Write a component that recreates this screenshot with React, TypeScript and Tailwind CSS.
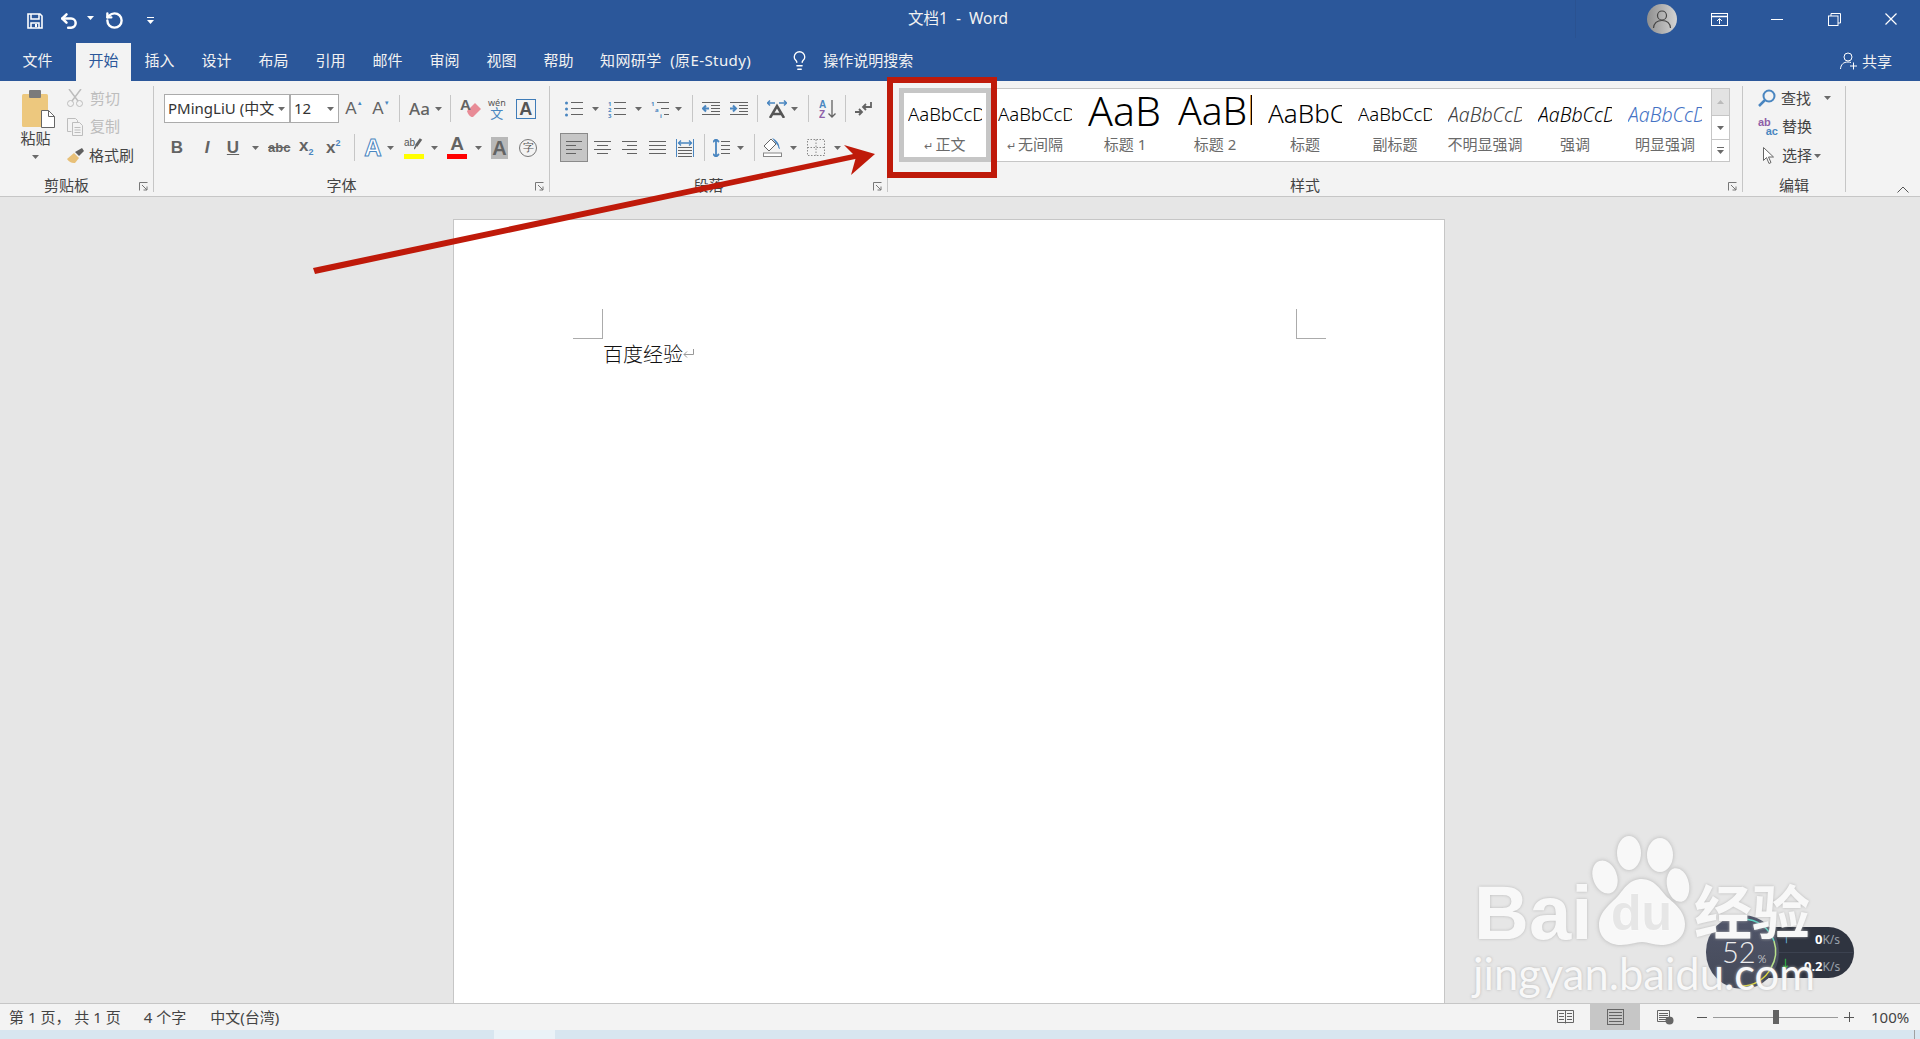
import React from 'react';
import { Lightbulb, RotateCcw, Undo2 } from 'lucide-react';

const GRAY = '#636363';
const BLUE = '#4a86c0';

function Caret({ color = '#6a6a6a', className = '' }: { color?: string; className?: string }) {
  return (
    <svg width="7" height="4" viewBox="0 0 7 4" className={`shrink-0 ${className}`}>
      <polygon points="0,0 7,0 3.5,4" fill={color} />
    </svg>
  );
}

function Launcher() {
  return (
    <svg width="9" height="9" viewBox="0 0 9 9" className="justify-self-end -mr-[15px]">
      <path d="M0.500 8.500V0.500H8.500M3 3L8 8M8 4.500V8H4.500" fill="none" stroke="#777" />
    </svg>
  );
}

function Sep({ className = '' }: { className?: string }) {
  return <div className={`w-px h-[27px] bg-[#c6c6c6] shrink-0 ${className}`} />;
}

function Lines({ x = 0, w = 16, ys, color = GRAY }: { x?: number; w?: number; ys: number[]; color?: string }) {
  return (
    <>
      {ys.map((y) => (
        <path key={y} d={`M${x} ${y}.5h${w}`} stroke={color} fill="none" />
      ))}
    </>
  );
}

function GroupLabel({ text }: { text: string }) {
  return (
    <div className="mt-auto h-[12px] grid grid-cols-[1fr_auto_1fr] items-center pr-[20px] text-[15px] leading-none text-[#444]">
      <span />
      <span className="-mt-[2px]">{text}</span>
      <Launcher />
    </div>
  );
}

function TitleBar() {
  return (
    <div className="h-[43px] grid grid-cols-[1fr_auto_1fr] items-center text-white">
      <div className="flex items-center pl-[27px] -mt-[2px]">
        <svg width="16" height="16" viewBox="0 0 16 16">
          <path d="M1 1h12l2 2v12H1z" fill="none" stroke="#fff" strokeWidth="1.600" />
          <path d="M4 1v5h8V1M4 15v-5h8v5" fill="none" stroke="#fff" strokeWidth="1.500" />
          <rect x="8" y="11" width="2" height="3" fill="#fff" />
        </svg>
        <Undo2 size={20} strokeWidth={3} className="ml-[16px] text-white" />
        <Caret color="#fff" className="ml-[8px] -mt-[5px]" />
        <RotateCcw size={19} strokeWidth={3} className="ml-[11px] text-white" />
        <svg width="7" height="7" viewBox="0 0 7 7" className="ml-[23px]">
          <path d="M0 0.500h7" stroke="#fff" />
          <polygon points="0,3 7,3 3.500,7" fill="#fff" />
        </svg>
      </div>
      <div className="text-[15.500px] text-[#f2f2f2] whitespace-pre -ml-[4px] -mt-[5px]">文档1  -  Word</div>
      <div className="flex items-center justify-end h-full">
        <div className="w-px h-[38px] bg-[#2a5291] mr-[71px] -mt-[5px]" />
        <div className="w-[30px] h-[30px] rounded-full bg-gradient-to-r from-[#8f8f8f] to-[#d4d4d4] flex items-center justify-center mr-[34px] -mt-[5px]">
          <svg width="20" height="20" viewBox="0 0 20 20">
            <circle cx="10" cy="6.500" r="4.500" fill="none" stroke="#444" strokeWidth="1.200" />
            <path d="M1.500 19c.5-5 4-7.500 8.500-7.500s8 2.500 8.500 7.500" fill="none" stroke="#444" strokeWidth="1.200" />
          </svg>
        </div>
        <svg width="17" height="13" viewBox="0 0 17 13" className="mr-[43px] -mt-[5px]">
          <rect x="0.500" y="0.500" width="16" height="12" fill="none" stroke="#fff" />
          <path d="M0 3.500h17" stroke="#fff" strokeWidth="1.500" />
          <path d="M8.500 11V6M6 8l2.500-2.500L11 8" fill="none" stroke="#fff" />
        </svg>
        <div className="w-[12px] h-px bg-white mr-[45px] -mt-[5px]" />
        <svg width="13" height="13" viewBox="0 0 13 13" className="mr-[44px] -mt-[5px]">
          <rect x="0.500" y="3" width="9.500" height="9.500" fill="none" stroke="#fff" />
          <path d="M3 3V0.500h9.500V10H10" fill="none" stroke="#fff" />
        </svg>
        <svg width="12" height="12" viewBox="0 0 12 12" className="mr-[23px] -mt-[5px]">
          <path d="M0.500 0.500l11 11M11.500 0.500l-11 11" stroke="#fff" strokeWidth="1.200" />
        </svg>
      </div>
    </div>
  );
}

function TabBar() {
  const rest = ['插入', '设计', '布局', '引用', '邮件', '审阅', '视图', '帮助'];
  return (
    <div className="h-[38px] flex items-end text-[15px] text-[#f2f2f2] pl-[9px]">
      <div className="w-[57px] h-full flex items-center justify-center pb-[3px]">文件</div>
      <div className="ml-[10px] w-[55px] h-full flex items-center justify-center bg-[#f3f3f3] text-[#2b579a] pb-[3px]">开始</div>
      {rest.map((t) => (
        <div key={t} className="w-[57px] h-full flex items-center justify-center pb-[3px]">{t}</div>
      ))}
      <div className="ml-[13px] h-full flex items-center pb-[3px] whitespace-pre tracking-[0.4px]">知网研学  (原E-Study)</div>
      <div className="ml-[38px] h-full flex items-center pb-[3px]">
        <Lightbulb size={21} strokeWidth={1.500} className="text-white" />
      </div>
      <div className="ml-[13px] h-full flex items-center pb-[3px]">操作说明搜索</div>
      <div className="ml-auto mr-[28px] h-full flex items-center pb-[2px]">
        <svg width="18" height="18" viewBox="0 0 18 18">
          <circle cx="8" cy="5" r="4" fill="none" stroke="#fff" />
          <path d="M0.500 17c.3-4.500 3-7 7.500-7 1 0 2 .2 3 .5M13.500 10.500v7M10 14h7" fill="none" stroke="#fff" />
        </svg>
        <span className="ml-[4px]">共享</span>
      </div>
    </div>
  );
}

function ClipboardGroup() {
  return (
    <div className="w-[154px] h-[106px] border-r border-[#c6c6c6] flex flex-col shrink-0">
      <div className="flex h-[84px]">
        <div className="w-[67px] flex flex-col items-center text-[15px] text-[#444] pt-[4px] pl-[4px]">
          <svg width="33" height="38" viewBox="0 0 33 38" className="shrink-0 ml-[5px]">
            <rect x="0" y="4" width="26" height="33" rx="1.500" fill="#edc87e" />
            <rect x="7" y="0" width="12" height="8" rx="1" fill="#7b7b7b" />
            <path d="M19.500 20.500h7l6 6v11h-13z" fill="#fff" stroke="#666" />
            <path d="M26.500 20.500v6h6" fill="none" stroke="#666" />
          </svg>
          <span className="leading-none mt-[3px]">粘贴</span>
          <Caret className="mt-[9px]" />
        </div>
        <div className="flex flex-col text-[15px] -mt-[2px]">
          <div className="h-[28px] flex items-center text-[#bdbdbd]">
            <svg width="16" height="18" viewBox="0 0 16 18">
              <path d="M2 0l9 12M14 0L5 12" stroke="#bdbdbd" strokeWidth="1.500" fill="none" />
              <circle cx="3.500" cy="14.500" r="3" fill="none" stroke="#bdbdbd" />
              <circle cx="12.500" cy="14.500" r="3" fill="none" stroke="#bdbdbd" />
            </svg>
            <span className="ml-[7px]">剪切</span>
          </div>
          <div className="h-[29px] flex items-center text-[#bdbdbd]">
            <svg width="16" height="18" viewBox="0 0 16 18">
              <path d="M0.500 0.500h8l2 2v2M0.500 0.500v13h4" fill="none" stroke="#bdbdbd" />
              <path d="M5.500 4.500h7l3 3v10h-10z" fill="none" stroke="#bdbdbd" />
              <path d="M7.500 9.500h6M7.500 12h6M7.500 14.500h6" stroke="#bdbdbd" />
            </svg>
            <span className="ml-[7px]">复制</span>
          </div>
          <div className="h-[29px] flex items-center text-[#444]">
            <svg width="17" height="16" viewBox="0 0 17 16">
              <path d="M0 11l7-6 5 5-4 5c-3 .500-6-1-8-4z" fill="#e8c078" />
              <path d="M8 4l4 4 5-5-2-3z" fill="#5f5f5f" />
            </svg>
            <span className="ml-[5px]">格式刷</span>
          </div>
        </div>
      </div>
      <GroupLabel text="剪贴板" />
    </div>
  );
}

function FontGroup() {
  return (
    <div className="w-[396px] h-[106px] border-r border-[#c6c6c6] flex flex-col shrink-0 pt-[8px]">
      <div className="h-[29px] flex items-center pl-[10px]">
        <div className="w-[175px] h-[29px] flex border border-[#ababab] bg-white text-[15px] text-[#333] shrink-0">
          <div className="w-[126px] border-r-2 border-[#ababab] flex items-center pl-[3px] whitespace-nowrap">
            PMingLiU (中文
            <Caret className="ml-[4px]" />
          </div>
          <div className="flex-1 flex items-center pl-[3px]">
            12
            <Caret className="ml-auto mr-[4px]" />
          </div>
        </div>
        <div className="w-[28px] flex justify-center text-[17px] leading-none text-[#636363] font-['Liberation_Sans',sans-serif] ml-[1px]">
          A<span className="text-[6px] leading-[7px] text-[#4a86c0]">▲</span>
        </div>
        <div className="w-[26px] flex justify-center text-[17px] leading-none text-[#636363] font-['Liberation_Sans',sans-serif]">
          A<span className="text-[6px] leading-[7px] text-[#4a86c0]">▼</span>
        </div>
        <Sep className="ml-[5px]" />
        <div className="ml-[9px] flex items-center text-[17px] font-medium text-[#636363]">
          Aa
          <Caret className="ml-[5px]" />
        </div>
        <Sep className="ml-[8px]" />
        <svg width="22" height="22" viewBox="0 0 22 22" className="ml-[9px]">
          <path d="M7 13l8-8 6 6-8 8c-2 .5-5-2-6-6z" fill="#e88b96" />
          <text x="0" y="12" fontSize="15" fontWeight="700" fill="#636363" fontFamily="Liberation Sans">A</text>
        </svg>
        <div className="ml-[5px] w-[20px] flex flex-col items-center leading-none">
          <span className="text-[9px] text-[#555]">wén</span>
          <span className="text-[13px] text-[#4a86c0]">文</span>
        </div>
        <div className="ml-[9px] w-[20px] h-[20px] border border-[#3f7cb8] flex items-center justify-center text-[18px] leading-none font-bold text-[#555] font-['Liberation_Sans',sans-serif]">A</div>
      </div>
      <div className="h-[29px] flex items-center mt-[10px] pl-[16px] text-[#636363] font-['Liberation_Sans',sans-serif]">
        <span className="w-[14px] text-center text-[17px] font-bold">B</span>
        <span className="ml-[16px] w-[14px] text-center text-[17px] font-bold italic">I</span>
        <span className="ml-[12px] w-[14px] text-center text-[17px] font-bold underline">U</span>
        <Caret className="ml-[12px]" />
        <span className="ml-[9px] w-[22px] text-center text-[13px] font-bold line-through">abc</span>
        <span className="ml-[9px] w-[18px] text-[17px] font-bold leading-none">
          x<span className="text-[9px] text-[#4a86c0] align-sub">2</span>
        </span>
        <span className="ml-[9px] w-[18px] text-[17px] font-bold leading-none">
          x<span className="text-[9px] text-[#4a86c0] align-super">2</span>
        </span>
        <Sep className="ml-[10px]" />
        <span className="ml-[9px] w-[18px] text-center text-[24px] leading-none font-bold text-white [-webkit-text-stroke:1px_#4a86c0]">A</span>
        <Caret className="ml-[5px]" />
        <div className="ml-[10px] w-[20px] flex flex-col items-center">
          <div className="flex items-center h-[15px] w-full">
            <span className="text-[10px] leading-[15px] text-[#555] -mt-[3px]">ab</span>
            <svg width="9" height="12" viewBox="0 0 9 12" className="-ml-[1px]">
              <path d="M7 1L2 8" stroke="#636363" strokeWidth="3" fill="none" />
              <path d="M2 8l-2 3" stroke="#636363" strokeWidth="1.500" fill="none" />
            </svg>
          </div>
          <div className="w-[20px] h-[5px] bg-[#ffff00] mt-[3px]" />
        </div>
        <Caret className="ml-[7px]" />
        <div className="ml-[9px] w-[20px] flex flex-col items-center">
          <span className="text-[19px] leading-[15px] font-bold">A</span>
          <div className="w-[20px] h-[5px] bg-[#ff0000] mt-[3px]" />
        </div>
        <Caret className="ml-[8px]" />
        <div className="ml-[9px] w-[17px] h-[22px] bg-[#b8b8b8] flex items-center justify-center text-[20px] font-bold leading-none">A</div>
        <div className="ml-[11px] w-[18px] h-[18px] rounded-full border border-[#777] flex items-center justify-center text-[11px] leading-none text-[#555]">字</div>
      </div>
      <GroupLabel text="字体" />
    </div>
  );
}

function ParagraphGroup() {
  return (
    <div className="w-[338px] h-[106px] border-r border-[#c6c6c6] flex flex-col shrink-0 pt-[8px]">
      <div className="h-[29px] flex items-center pl-[15px]">
        <svg width="18" height="16" viewBox="0 0 18 16">
          <circle cx="1.500" cy="2" r="1.500" fill={BLUE} />
          <circle cx="1.500" cy="8" r="1.500" fill={BLUE} />
          <circle cx="1.500" cy="14" r="1.500" fill={BLUE} />
          <Lines x={6} w={12} ys={[1, 7, 13]} />
        </svg>
        <Caret className="ml-[9px]" />
        <svg width="18" height="18" viewBox="0 0 18 18" className="ml-[9px]">
          <text x="0" y="6" fontSize="6" fontWeight="700" fill={BLUE}>1</text>
          <text x="0" y="12" fontSize="6" fontWeight="700" fill={BLUE}>2</text>
          <text x="0" y="18" fontSize="6" fontWeight="700" fill={BLUE}>3</text>
          <Lines x={6} w={12} ys={[2, 8, 14]} />
        </svg>
        <Caret className="ml-[9px]" />
        <svg width="18" height="18" viewBox="0 0 18 18" className="ml-[9px]">
          <text x="0" y="6" fontSize="6" fontWeight="700" fill={BLUE}>1</text>
          <text x="4" y="12" fontSize="6" fontWeight="700" fill={BLUE}>a</text>
          <text x="9" y="18" fontSize="6" fontWeight="700" fill={BLUE}>i</text>
          <Lines x={6} w={12} ys={[2]} />
          <Lines x={10} w={8} ys={[8]} />
          <Lines x={13} w={5} ys={[14]} />
        </svg>
        <Caret className="ml-[6px]" />
        <Sep className="ml-[10px]" />
        <svg width="18" height="16" viewBox="0 0 18 16" className="ml-[9px]">
          <Lines x={0} w={18} ys={[1, 13]} />
          <Lines x={9} w={9} ys={[4, 7, 10]} />
          <path d="M7 7.500H1M4 4.500l-3 3 3 3" fill="none" stroke={BLUE} strokeWidth="2" />
        </svg>
        <svg width="18" height="16" viewBox="0 0 18 16" className="ml-[10px]">
          <Lines x={0} w={18} ys={[1, 13]} />
          <Lines x={9} w={9} ys={[4, 7, 10]} />
          <path d="M0 7.500h6M3 4.500l3 3-3 3" fill="none" stroke={BLUE} strokeWidth="2" />
        </svg>
        <Sep className="ml-[9px]" />
        <svg width="20" height="18" viewBox="0 0 20 18" className="ml-[9px]">
          <path d="M0 3h8M3 0.500L0.500 3 3 5.500M12 3h8M17 0.500L19.500 3 17 5.500" fill="none" stroke={BLUE} strokeWidth="1.500" />
          <path d="M3 18L10 6l7 12M6 14h8" fill="none" stroke="#555" strokeWidth="2.500" />
        </svg>
        <Caret className="ml-[4px]" />
        <Sep className="ml-[10px]" />
        <svg width="17" height="20" viewBox="0 0 17 20" className="ml-[10px]">
          <text x="0" y="9" fontSize="10" fontWeight="700" fill={BLUE} fontFamily="Liberation Sans">A</text>
          <text x="0" y="19" fontSize="10" fontWeight="700" fill="#8e5fa8" fontFamily="Liberation Sans">Z</text>
          <path d="M13 1v17M9.500 14.500L13 18l3.500-3.500" fill="none" stroke="#636363" strokeWidth="1.300" />
        </svg>
        <Sep className="ml-[9px]" />
        <svg width="17" height="14" viewBox="0 0 17 14" className="ml-[9px]">
          <path d="M16 0v5H8M11 2L8 5l3 3" fill="none" stroke="#636363" strokeWidth="1.800" />
          <path d="M0 10h7M4 7l3 3-3 3" fill="none" stroke="#636363" strokeWidth="1.800" />
        </svg>
      </div>
      <div className="h-[29px] flex items-center mt-[10px] pl-[10px]">
        <div className="w-[28px] h-[29px] bg-[#c6c6c6] border border-[#8a8a8a] flex items-center justify-center">
          <svg width="16" height="13" viewBox="0 0 16 13">
            <Lines x={0} w={16} ys={[0, 8]} />
            <Lines x={0} w={10} ys={[4, 12]} />
          </svg>
        </div>
        <svg width="17" height="13" viewBox="0 0 17 13" className="ml-[6px]">
          <Lines x={0} w={17} ys={[0, 8]} />
          <Lines x={3} w={11} ys={[4, 12]} />
        </svg>
        <svg width="15" height="13" viewBox="0 0 15 13" className="ml-[11px]">
          <Lines x={0} w={15} ys={[0, 8]} />
          <Lines x={5} w={10} ys={[4, 12]} />
        </svg>
        <svg width="17" height="13" viewBox="0 0 17 13" className="ml-[12px]">
          <Lines x={0} w={17} ys={[0, 4, 8, 12]} />
        </svg>
        <svg width="18" height="18" viewBox="0 0 18 18" className="ml-[10px]">
          <path d="M0.500 0v18M17.500 0v18" stroke={BLUE} />
          <path d="M2 4h14M5 1.500L2.500 4 5 6.500M13 1.500L15.500 4 13 6.500" fill="none" stroke={BLUE} strokeWidth="1.300" />
          <Lines x={2} w={14} ys={[8, 11, 14, 17]} />
        </svg>
        <Sep className="ml-[10px]" />
        <svg width="17" height="18" viewBox="0 0 17 18" className="ml-[8px]">
          <path d="M3 0v18M0 3l3-3 3 3M0 15l3 3 3-3" fill="none" stroke={BLUE} strokeWidth="1.800" />
          <Lines x={8} w={9} ys={[2, 6, 10, 14]} />
        </svg>
        <Caret className="ml-[7px]" />
        <Sep className="ml-[10px]" />
        <svg width="19" height="19" viewBox="0 0 19 19" className="ml-[8px]">
          <path d="M8 1L1 8l5 5 7-7z" fill="#fff" stroke="#666" />
          <path d="M9 0c3 1 6 4 7 7 0 2 1 3 1 4-1 0-2-1-2-3" fill={BLUE} />
          <rect x="0.500" y="15" width="18" height="3.500" fill="#fff" stroke="#888" />
        </svg>
        <Caret className="ml-[8px]" />
        <svg width="18" height="17" viewBox="0 0 18 17" className="ml-[10px]">
          <path d="M0.500 0.500h17v16h-17zM9 0.500v16M0.500 8.500h17" fill="none" stroke="#8a8a8a" strokeDasharray="1.500 1.500" />
        </svg>
        <Caret className="ml-[9px]" />
      </div>
      <GroupLabel text="段落" />
    </div>
  );
}

const STYLES = [
  { sample: 'AaBbCcDd', label: '正文', mark: true, sampleClass: 'text-[18.500px] font-light mb-[6px]' },
  { sample: 'AaBbCcDd', label: '无间隔', mark: true, sampleClass: 'text-[18.500px] font-light mb-[7px]' },
  { sample: 'AaBbC', label: '标题 1', sampleClass: 'text-[41px] font-light -mb-[1px]' },
  { sample: 'AaBbC', label: '标题 2', sampleClass: 'text-[39px] font-light mb-[1px]' },
  { sample: 'AaBbC', label: '标题', sampleClass: 'text-[26px] font-light mb-[4px]' },
  { sample: 'AaBbCcDd', label: '副标题', sampleClass: 'text-[18.500px] font-light mb-[7px]' },
  { sample: 'AaBbCcDd', label: '不明显强调', sampleClass: 'text-[19.500px] font-light italic text-[#404040] mb-[6px]' },
  { sample: 'AaBbCcDd', label: '强调', sampleClass: 'text-[19.500px] font-light italic mb-[6px]' },
  { sample: 'AaBbCcDd', label: '明显强调', sampleClass: 'text-[19.500px] font-light italic text-[#4472c4] mb-[6px]' },
];

function StyleGroup() {
  return (
    <div className="w-[855px] h-[106px] border-r border-[#c6c6c6] flex flex-col shrink-0 pt-[2px]">
      <div className="ml-[11px] w-[831px] h-[74px] border border-[#c6c6c6] flex bg-white">
        <div className="w-[811px] flex">
          {STYLES.map((s, i) => (
            <div
              key={s.label}
              className={`w-[90px] shrink-0 flex flex-col items-center ${i === 0 ? 'border-[5px] border-[#c6c6c6] -m-px h-[74px] w-[92px]' : ''}`}
            >
              <div className={`w-[74px] overflow-hidden whitespace-nowrap flex items-end text-black leading-none ${i === 0 ? 'h-[36px]' : 'h-[41px]'}`}>
                <span className={`${s.sampleClass} leading-none font-['Noto_Sans',sans-serif]`}>{s.sample}</span>
              </div>
              <div className={`text-[15px] leading-[20px] text-[#6a6a6a] whitespace-nowrap ${i === 0 ? 'mt-[5px]' : 'mt-[4px]'}`}>
                {s.mark && <span className="text-[11px] mr-[2px]">↵</span>}
                {s.label}
              </div>
            </div>
          ))}
        </div>
        <div className="w-[18px] flex flex-col border-l border-[#c6c6c6]">
          <div className="h-[26px] bg-[#e3e3e3] flex items-center justify-center">
            <Caret color="#bbb" className="rotate-180" />
          </div>
          <div className="h-[24px] bg-white border-t border-[#c6c6c6] flex items-center justify-center">
            <Caret />
          </div>
          <div className="flex-1 bg-white border-t border-[#c6c6c6] flex flex-col items-center justify-center gap-[2px]">
            <div className="w-[7px] h-px bg-[#6a6a6a]" />
            <Caret />
          </div>
        </div>
      </div>
      <GroupLabel text="样式" />
    </div>
  );
}

function EditGroup() {
  return (
    <div className="w-[103px] h-[106px] border-r border-[#c6c6c6] flex flex-col shrink-0 text-[15px] text-[#444]">
      <div className="h-[28px] flex items-center pl-[15px] -mt-[2px]">
        <svg width="18" height="18" viewBox="0 0 18 18">
          <circle cx="11" cy="7" r="5.500" fill="none" stroke={BLUE} strokeWidth="2" />
          <path d="M7 11l-6 6" stroke={BLUE} strokeWidth="2.500" />
        </svg>
        <span className="ml-[5px]">查找</span>
        <Caret className="ml-[13px]" />
      </div>
      <div className="h-[29px] flex items-center pl-[15px]">
        <div className="w-[20px] flex flex-col leading-[9px] font-bold text-[11px] font-['Liberation_Sans',sans-serif]">
          <span className="text-[#8e5fa8]">ab</span>
          <span className="text-[#4a86c0] text-right">ac</span>
        </div>
        <span className="ml-[4px]">替换</span>
      </div>
      <div className="h-[29px] flex items-center pl-[20px]">
        <svg width="11" height="17" viewBox="0 0 11 17">
          <path d="M0.500 0.500v13l3-3 2.500 6 2-1-2.500-5.500h5z" fill="#fff" stroke="#666" />
        </svg>
        <span className="ml-[8px]">选择</span>
        <Caret className="ml-[2px]" />
      </div>
      <div className="mt-auto h-[12px] flex items-center justify-center text-[15px] leading-none">
        <span className="-mt-[2px]">编辑</span>
      </div>
    </div>
  );
}

function Ribbon() {
  return (
    <div className="h-[116px] bg-[#f3f3f3] border-b border-[#c6c6c6] pt-[5px] flex">
      <ClipboardGroup />
      <FontGroup />
      <ParagraphGroup />
      <StyleGroup />
      <EditGroup />
      <div className="flex-1 flex justify-end items-end pr-[11px] pb-[3px]">
        <svg width="12" height="7" viewBox="0 0 12 7">
          <path d="M0.500 6.500L6 1l5.500 5.500" fill="none" stroke="#555" />
        </svg>
      </div>
    </div>
  );
}

function Page() {
  return (
    <div className="flex-1 min-h-0 bg-[#e6e6e6] pl-[453px] pt-[22px] flex">
      <div className="w-[992px] bg-white border-x border-t border-[#c6c6c6]">
        <div className="flex justify-between pl-[119px] pr-[118px] pt-[89px]">
          <div className="w-[30px] h-[30px] border-r border-b border-[#ababab]" />
          <div className="w-[30px] h-[30px] border-l border-b border-[#ababab]" />
        </div>
        <div className="pl-[149px] mt-[1px] flex items-center text-[20px] leading-[28px] text-[#111] font-['Noto_Sans_CJK_TC',sans-serif] font-light">
          百度经验
          <svg width="11" height="10" viewBox="0 0 11 10">
            <path d="M10.500 0v5.500H1M4 2.500L1 5.500l3 3" fill="none" stroke="#999" />
          </svg>
        </div>
      </div>
    </div>
  );
}

function StatusBar() {
  return (
    <div className="h-[27px] bg-[#f3f3f3] border-t border-[#c6c6c6] flex items-center text-[15px] text-[#444] shrink-0">
      <span className="ml-[9px] whitespace-pre">第 1 页， 共 1 页</span>
      <span className="ml-[23px]">4 个字</span>
      <span className="ml-[24px]">中文(台湾)</span>
      <div className="ml-auto flex items-center h-full">
        <svg width="17" height="14" viewBox="0 0 17 14">
          <path d="M0.500 0.500h16v12h-16zM8.500 0.500v13" fill="none" stroke="#666" />
          <Lines x={2} w={5} ys={[3, 6, 9]} />
          <Lines x={10} w={5} ys={[3, 6, 9]} />
        </svg>
        <div className="ml-[16px] w-[50px] h-full bg-[#c6c6c6] flex items-center justify-center">
          <svg width="17" height="16" viewBox="0 0 17 16">
            <rect x="0.500" y="0.500" width="16" height="15" fill="none" stroke="#666" />
            <Lines x={2} w={13} ys={[3, 6, 9, 12]} />
          </svg>
        </div>
        <svg width="17" height="15" viewBox="0 0 17 15" className="ml-[17px]">
          <path d="M0.500 0.500h12v11h-12z" fill="none" stroke="#666" />
          <Lines x={2} w={9} ys={[3, 5, 7, 9]} />
          <circle cx="12.500" cy="10.500" r="4" fill="#666" />
        </svg>
        <div className="ml-[23px] w-[10px] h-px bg-[#555]" />
        <div className="ml-[6px] w-[125px] h-px bg-[#9a9a9a] flex items-center pl-[60px]">
          <div className="w-[6px] h-[14px] bg-[#636363] shrink-0" />
        </div>
        <div className="ml-[6px] relative w-[10px] h-[10px]">
          <div className="absolute left-0 top-[5px] w-[10px] h-px bg-[#555]" />
          <div className="absolute left-[5px] top-0 w-px h-[10px] bg-[#555]" />
        </div>
        <span className="ml-[17px] mr-[10px] w-[39px] text-[15px] whitespace-nowrap">100%</span>
      </div>
    </div>
  );
}

function BottomStrip() {
  return (
    <div className="h-[9px] shrink-0 bg-[#d8e6f0] flex overflow-hidden">
      <div className="ml-[494px] w-[61px] bg-[#eaf2f7]" />
      <div className="ml-[1235px] text-[14px] leading-[14px] pt-[7px] text-black">16:37</div>
      <div className="ml-auto mr-[5px] w-px bg-[#a0a0a0]" />
    </div>
  );
}

function Annotations() {
  return (
    <>
      <svg width="1920" height="1039" viewBox="0 0 1920 1039" className="absolute inset-0 pointer-events-none">
        <polygon points="313,268 858,153 860,158 315,274" fill="#bf1a0a" />
        <polygon points="875,154 844,145 856,157 851,175" fill="#bf1a0a" />
      </svg>
      <div className="absolute left-[887px] top-[77px] w-[110px] h-[101px] border-[6px] border-[#bf1a0a]" />
    </>
  );
}

function NetWidget() {
  return (
    <div className="absolute left-[1706px] top-[915px] w-[148px] h-[74px] text-white">
      <div className="absolute left-[36px] top-[12px] w-[112px] h-[51px] rounded-r-full bg-[#2f3440]">
        <div className="absolute left-[36px] right-0 top-[25px] h-px bg-[#3c4250]" />
        <span className="absolute left-[73px] top-[3px] text-[13px] font-bold">0<span className="font-normal text-[12px] text-[#9aa0aa]">K/s</span></span>
        <span className="absolute left-[62px] top-[30px] text-[13px] font-bold">0.2<span className="font-normal text-[12px] text-[#9aa0aa]">K/s</span></span>
        <span className="absolute left-[39px] top-[4px] text-[11px] text-[#6fc3ee]">↑</span>
        <span className="absolute left-[38px] top-[29px] text-[11px] font-bold text-[#2fb344]">↓</span>
      </div>
      <div className="absolute left-0 top-0 w-[73px] h-[74px] rounded-full bg-gradient-to-b from-[#50556a] to-[#454a58]" />
      <svg width="74" height="74" viewBox="0 0 74 74" className="absolute left-0 top-0">
        <path d="M37 4a33 33 0 0 1 31 22" fill="none" stroke="#5fd6c4" strokeWidth="1.500" />
        <path d="M68 26a33 33 0 0 1-3 27" fill="none" stroke="#b7e08a" strokeWidth="1.500" />
        <path d="M65 53a33 33 0 0 1-30 18" fill="none" stroke="#e2dc3a" strokeWidth="1.500" />
      </svg>
      <div className="absolute left-[16px] top-[21px] text-[29px] leading-[32px] font-light font-['Lato',sans-serif] text-[#eee]">
        52<span className="text-[11px] ml-[2px]">%</span>
      </div>
    </div>
  );
}

function Watermark() {
  return (
    <div className="absolute left-[1470px] top-[830px] w-[360px] h-[175px] text-[#f8f8f8] font-['Liberation_Sans',sans-serif] [text-shadow:0_0_3px_#b5b5b5] pointer-events-none">
      <span className="absolute left-[4px] top-[45px] text-[76px] leading-[76px] font-bold">Bai</span>
      <svg width="110" height="120" viewBox="0 0 110 120" className="absolute left-[120px] top-[5px] drop-shadow-[0_0_2px_#b5b5b5]">
        <ellipse cx="39" cy="18" rx="12" ry="17" fill="#f8f8f8" />
        <ellipse cx="70" cy="20" rx="13" ry="17" fill="#f8f8f8" />
        <ellipse cx="15" cy="42" rx="12" ry="17" fill="#f8f8f8" transform="rotate(-20 15 42)" />
        <ellipse cx="88" cy="50" rx="11" ry="17" fill="#f8f8f8" transform="rotate(-12 88 50)" />
        <path d="M52 44c12 0 18 10 24 17 6 6 19 14 19 28 0 14-11 21-24 21-8 0-13-3-19-3s-12 3-21 3c-12 0-22-7-22-20 0-14 13-22 19-29 6-7 11-17 24-17z" fill="#f8f8f8" />
      </svg>
      <span className="absolute left-[141px] top-[58px] text-[50px] leading-[50px] font-bold text-[#e6e6e6] [text-shadow:0_0_2px_#fff]">du</span>
      <span className="absolute left-[224px] top-[48px] text-[58px] leading-[62px] font-bold whitespace-nowrap font-['Noto_Sans_CJK_SC',sans-serif]">经验</span>
      <span className="absolute left-[3px] top-[118px] text-[43.500px] leading-[50px] font-['Lato',sans-serif] whitespace-nowrap">jingyan.baidu.com</span>
    </div>
  );
}

export default function App() {
  return (
    <div className="relative w-[1920px] h-[1039px] overflow-hidden flex flex-col bg-[#2b579a] font-['Noto_Sans','Noto_Sans_CJK_SC',sans-serif]">
      <TitleBar />
      <TabBar />
      <Ribbon />
      <Page />
      <StatusBar />
      <BottomStrip />
      <NetWidget />
      <Watermark />
      <Annotations />
    </div>
  );
}
